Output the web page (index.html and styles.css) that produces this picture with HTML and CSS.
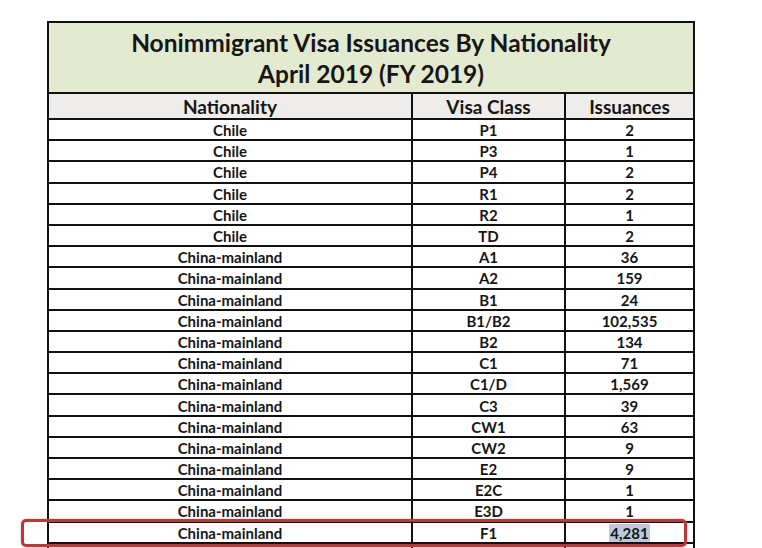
FILE: index.html
```html
<!DOCTYPE html>
<html>
<head>
<meta charset="utf-8">
<link rel="stylesheet" href="styles.css">
</head>
<body>
<div class="page">
  <table class="visa">
    <colgroup>
      <col class="c-nat">
      <col class="c-cls">
      <col class="c-iss">
    </colgroup>
    <thead>
      <tr class="title-row">
        <th colspan="3">Nonimmigrant Visa Issuances By Nationality<br>April 2019 (FY 2019)</th>
      </tr>
      <tr class="head-row">
        <th>Nationality</th>
        <th>Visa Class</th>
        <th>Issuances</th>
      </tr>
    </thead>
    <tbody>
      <tr><td>Chile</td><td>P1</td><td>2</td></tr>
      <tr><td>Chile</td><td>P3</td><td>1</td></tr>
      <tr><td>Chile</td><td>P4</td><td>2</td></tr>
      <tr><td>Chile</td><td>R1</td><td>2</td></tr>
      <tr><td>Chile</td><td>R2</td><td>1</td></tr>
      <tr><td>Chile</td><td>TD</td><td>2</td></tr>
      <tr><td>China-mainland</td><td>A1</td><td>36</td></tr>
      <tr><td>China-mainland</td><td>A2</td><td>159</td></tr>
      <tr><td>China-mainland</td><td>B1</td><td>24</td></tr>
      <tr><td>China-mainland</td><td>B1/B2</td><td>102,535</td></tr>
      <tr><td>China-mainland</td><td>B2</td><td>134</td></tr>
      <tr><td>China-mainland</td><td>C1</td><td>71</td></tr>
      <tr><td>China-mainland</td><td>C1/D</td><td>1,569</td></tr>
      <tr><td>China-mainland</td><td>C3</td><td>39</td></tr>
      <tr><td>China-mainland</td><td>CW1</td><td>63</td></tr>
      <tr><td>China-mainland</td><td>CW2</td><td>9</td></tr>
      <tr><td>China-mainland</td><td>E2</td><td>9</td></tr>
      <tr><td>China-mainland</td><td>E2C</td><td>1</td></tr>
      <tr><td>China-mainland</td><td>E3D</td><td>1</td></tr>
      <tr><td>China-mainland</td><td>F1</td><td><span class="sel">4,281</span></td></tr>
      <tr class="next"><td></td><td></td><td></td></tr>
    </tbody>
  </table>
  <div class="mark"></div>
</div>
</body>
</html>
```
FILE: styles.css
```css
html, body {
  margin: 0;
  padding: 0;
  background: #ffffff;
}
.page {
  position: relative;
  width: 762px;
  height: 548px;
  overflow: hidden;
  padding: 21px 0 0 47px;
  box-sizing: border-box;
}
.visa {
  border-collapse: collapse;
  table-layout: fixed;
  width: 646px;
  font-family: Lato, "Liberation Sans", sans-serif;
  font-weight: 700;
  color: #161616;
  border: 2px solid #111;
}
.c-nat { width: 364px; }
.c-cls { width: 153px; }
.c-iss { width: 129px; }
.visa th, .visa td {
  border: 2px solid #111;
  text-align: center;
  padding: 0;
}
.title-row th {
  background: #e3eacf;
  height: 68px;
  font-size: 24.5px;
  line-height: 31px;
  padding-top: 1px;
}
.head-row th {
  background: #efedeb;
  height: 22px;
  font-size: 19px;
  line-height: 22px;
  padding-top: 2px;
}
.visa td {
  height: 18.2px;
  font-size: 15px;
  line-height: 18px;
  padding-top: 1px;
}
.sel {
  background: #bccbdb;
  padding: 0 1px;
}
.mark {
  position: absolute;
  left: 21px;
  top: 519px;
  width: 666px;
  height: 28px;
  box-sizing: border-box;
  border: 3px solid #b8393b;
  border-radius: 5px;
  box-shadow: 0 0 2px rgba(200, 60, 60, 0.5);
}
```
